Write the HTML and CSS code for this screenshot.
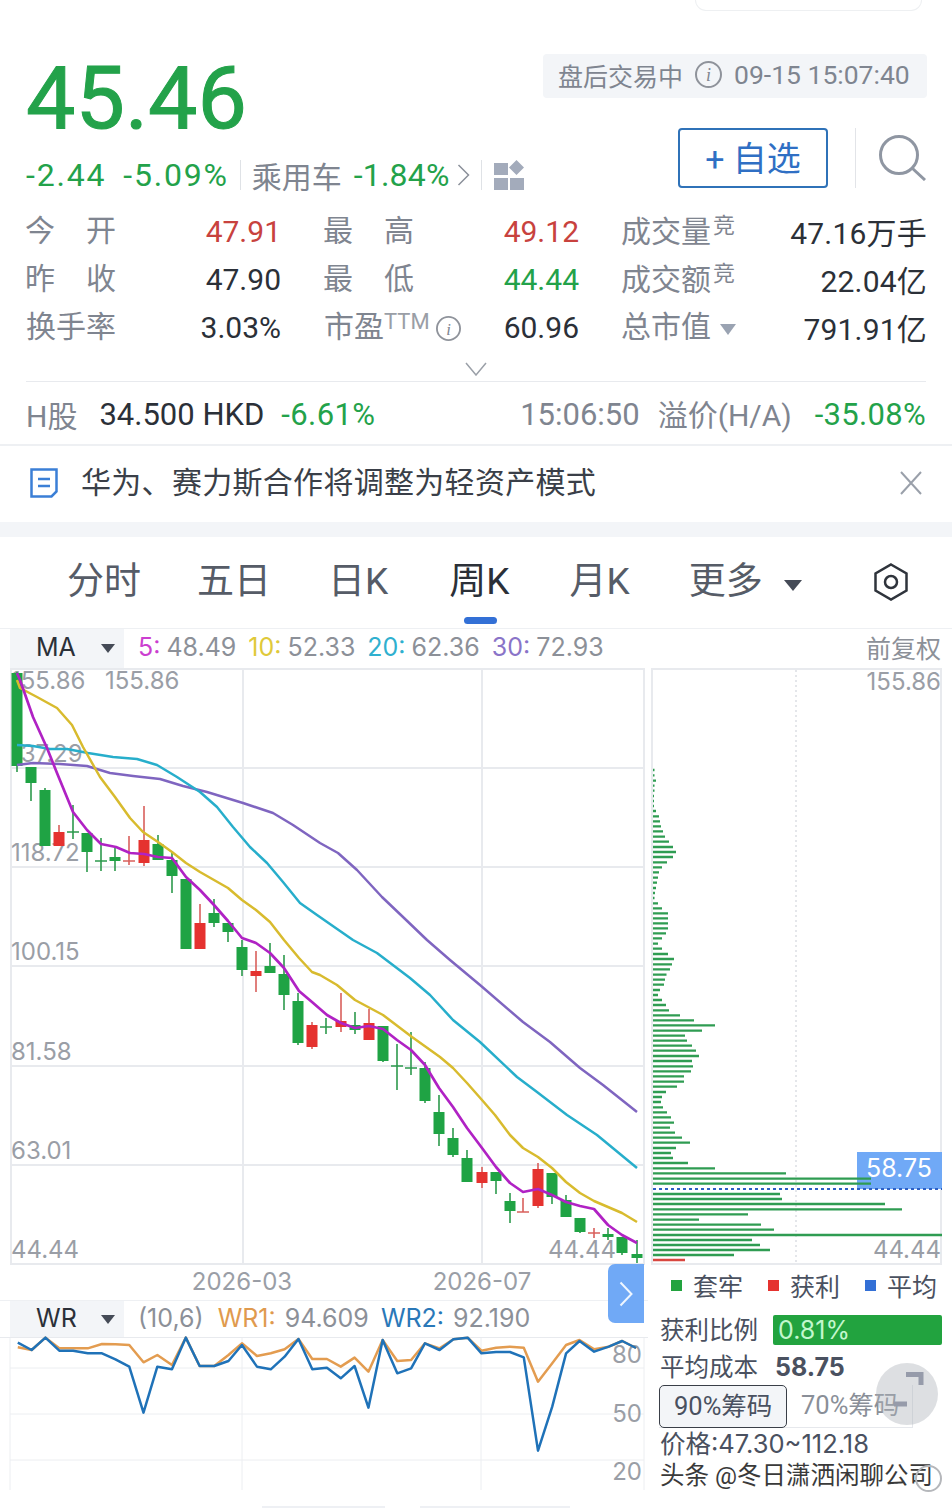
FILE: index.html
```html
<!DOCTYPE html>
<html lang="zh">
<head>
<meta charset="utf-8">
<title>45.46</title>
<link rel="stylesheet" href="styles.css">
</head>
<body>
<div class="page">
  <div class="top-pill"></div>

  <section class="quote">
    <div class="quote-left">
      <div class="price">45.46</div>
      <div class="sub">
        <span class="up sub-num">-2.44</span>
        <span class="up sub-num sub-pct">-5.09%</span>
        <i class="vbar"></i>
        <span class="muted">乘用车</span>
        <span class="up sub-sector">-1.84%</span>
        <svg class="sub-chev" viewBox="0 0 13 24"><path d="M1.5 2L11.5 12L1.5 22" /></svg>
        <i class="vbar vbar-b"></i>
        <svg class="sub-grid" viewBox="0 0 30 30"><path d="M0 3h14v12H0zM0 18h14v12H0zM16 18h14v12H16zM22.500 0l7.500 7.500-7.500 7.500-7.500-7.500z"/></svg>
      </div>
    </div>
    <div class="quote-right">
      <div class="status">
        <span>盘后交易中</span>
        <svg class="info" viewBox="0 0 27 27"><circle cx="13.500" cy="13.500" r="12.500"/><text x="13.500" y="20" text-anchor="middle">i</text></svg>
        <span class="status-time">09-15 15:07:40</span>
      </div>
      <div class="actions">
        <button class="fav">+ 自选</button>
        <i class="act-line"></i>
        <svg class="search" viewBox="0 0 48 46"><circle cx="21" cy="20" r="18.500"/><path d="M34 33L47 45"/></svg>
      </div>
    </div>
  </section>

  <section class="stats">
    <div class="cell"><span class="lbl lbl-sp"><b>今</b><b>开</b></span><span class="val red">47.91</span></div>
    <div class="cell"><span class="lbl lbl-sp"><b>最</b><b>高</b></span><span class="val red">49.12</span></div>
    <div class="cell"><span class="lbl">成交量<sup class="sup">竞</sup></span><span class="val">47.16万手</span></div>
    <div class="cell"><span class="lbl lbl-sp"><b>昨</b><b>收</b></span><span class="val">47.90</span></div>
    <div class="cell"><span class="lbl lbl-sp"><b>最</b><b>低</b></span><span class="val up">44.44</span></div>
    <div class="cell"><span class="lbl">成交额<sup class="sup">竞</sup></span><span class="val">22.04亿</span></div>
    <div class="cell"><span class="lbl">换手率</span><span class="val">3.03%</span></div>
    <div class="cell"><span class="lbl lbl-row">市盈<sup class="sup sup-ttm">TTM</sup><svg class="info info-s" viewBox="0 0 27 27"><circle cx="13.500" cy="13.500" r="12.500"/><text x="13.500" y="20" text-anchor="middle">i</text></svg></span><span class="val">60.96</span></div>
    <div class="cell"><span class="lbl lbl-row">总市值<i class="tri-s"></i></span><span class="val">791.91亿</span></div>
  </section>

  <div class="expand"><svg viewBox="0 0 22 14"><path d="M1 1L11 13L21 1"/></svg></div>

  <section class="hrow">
    <span class="muted h-name">H股</span>
    <span class="h-price">34.500 HKD</span>
    <span class="up h-pct">-6.61%</span>
    <span class="muted h-time">15:06:50</span>
    <span class="muted h-prem">溢价(H/A)</span>
    <span class="up h-val">-35.08%</span>
  </section>

  <section class="notice">
    <svg class="notice-ic" viewBox="0 0 28 30"><path d="M1.500 1.500h25v22l-5 5h-20z"/><path d="M8 11h12M8 18h12"/></svg>
    <span class="notice-text">华为、赛力斯合作将调整为轻资产模式</span>
    <svg class="notice-x" viewBox="0 0 22 24"><path d="M1 1L21 23M21 1L1 23"/></svg>
  </section>

  <div class="band"></div>

  <nav class="tabs">
    <span class="tab">分时</span>
    <span class="tab">五日</span>
    <span class="tab tab-k">日K</span>
    <span class="tab active">周K</span>
    <span class="tab tab-mon">月K</span>
    <span class="tab tab-more">更多</span>
    <i class="tab-tri"></i>
    <svg class="tab-hex" viewBox="0 0 36 38"><path d="M18 1.500L33.500 10.500V27.500L18 36.500L2.500 27.500V10.500Z"/><circle cx="18" cy="19" r="6"/></svg>
  </nav>

  <div class="legend-row">
    <div class="sel"><span>MA</span><i class="sel-tri"></i></div>
    <span class="lg c-ma5">5:</span><span class="lg-v">48.49</span>
    <span class="lg c-ma10">10:</span><span class="lg-v">52.33</span>
    <span class="lg c-ma20">20:</span><span class="lg-v">62.36</span>
    <span class="lg c-ma30">30:</span><span class="lg-v">72.93</span>
    <span class="adj">前复权</span>
  </div>

  <section class="chart-row">
    <div class="chart-left">
      <svg class="kline" viewBox="0 668 648 632">
        <path class="grid" d="M11 669H644M11 768H644M11 867H644M11 966H644M11 1066H644M11 1165H644M11 1264H644M11 668V1265M243 668V1265M482 668V1265M644 668V1265"/>
        <text class="axis" x="11" y="689">155.86</text>
        <text class="axis" x="105" y="689">155.86</text>
        <text class="axis" x="11" y="762">137.29</text>
        <text class="axis" x="11" y="861">118.72</text>
        <text class="axis" x="11" y="960">100.15</text>
        <text class="axis" x="11" y="1060">81.58</text>
        <text class="axis" x="11" y="1159">63.01</text>
        <text class="axis" x="11" y="1258">44.44</text>
        <text class="axis" x="548" y="1258">44.44</text>
        <text class="axis" x="242" y="1290" text-anchor="middle">2026-03</text>
        <text class="axis" x="482" y="1290" text-anchor="middle">2026-07</text>
        <path class="wick-g" d="M17 672V772M31 783V801M45 788V790M73 805V839M87 852V872M101 838V871M115 848V871M158 835V844M172 853V893M214 899V927M228 932V942M242 940V976M270 943V966M284 955V1010M298 993V1045M326 1018V1034M355 1012V1034M383 1061V1062M397 1044V1090M411 1032V1075M425 1062V1103M439 1095V1146M453 1128V1157M467 1150V1158M496 1181V1194M510 1193V1223M552 1197V1204M566 1195V1200M580 1232V1233M608 1228V1240M622 1253V1255M637 1240V1263M67 832h12M95 861h12M320 1027h12M391 1066h12M405 1068h12"/>
        <path class="wick-r" d="M59 825V832M129 836V865M144 806V866M200 904V923M256 951V992M312 1022V1049M341 993V1032M369 1009V1023M482 1167V1188M523 1198V1212M538 1163V1208M594 1228V1238M123 861h12M517 1212h12M588 1233h12"/>
        <path class="body-g" d="M11.500 673h11v93h-11zM25.500 767h11v16h-11zM39.500 790h11v56h-11zM81.500 833h11v19h-11zM109.500 857h11v4h-11zM152.500 844h11v16h-11zM166.500 860h11v16h-11zM180.500 879h11v70h-11zM208.500 913h11v10h-11zM222.500 923h11v9h-11zM236.500 947h11v23h-11zM264.500 966h11v7h-11zM278.500 974h11v21h-11zM292.500 1001h11v42h-11zM349.500 1025h11v5h-11zM377.500 1026h11v35h-11zM419.500 1068h11v33h-11zM433.500 1112h11v22h-11zM447.500 1138h11v17h-11zM461.500 1158h11v24h-11zM490.500 1172h11v9h-11zM504.500 1201h11v10h-11zM546.500 1173h11v24h-11zM560.500 1200h11v17h-11zM574.500 1218h11v14h-11zM602.500 1234h11v3h-11zM616.500 1237h11v16h-11zM631.500 1254h11v4h-11z"/>
        <path class="body-r" d="M53.500 832h11v14h-11zM138.500 840h11v23h-11zM194.500 923h11v26h-11zM250.500 971h11v5h-11zM306.500 1025h11v22h-11zM335.500 1021h11v6h-11zM363.500 1023h11v17h-11zM476.500 1172h11v11h-11zM532.500 1169h11v37h-11z"/>
        <polyline class="ma ma30" points="17,765 33,763 60,764 87,766 110,773 133,776 160,779 183,786 207,792 243,803 273,813 293,825 320,843 338,853 357,870 382,897 403,917 427,940 450,960 480,985 523,1022 550,1042 580,1068 603,1085 637,1112"/>
        <polyline class="ma ma20" points="17,745 33,746 50,749 67,749 88,753 113,757 137,759 157,765 177,777 200,792 217,807 233,827 250,847 267,863 283,882 300,903 317,915 353,940 377,953 410,978 430,995 453,1020 480,1042 517,1077 537,1092 567,1115 597,1135 637,1168"/>
        <polyline class="ma ma10" points="17,680 20,688 37,697 57,708 72,725 83,747 100,777 115,797 130,818 143,832 158,842 172,852 186,863 200,872 214,880 228,888 242,900 256,910 270,922 284,940 299,958 312,972 320,975 337,985 355,1000 383,1015 412,1037 440,1057 453,1068 467,1083 482,1100 495,1115 510,1135 523,1148 538,1157 552,1168 566,1182 580,1193 594,1201 608,1207 622,1213 637,1222"/>
        <polyline class="ma ma5" points="17,673 20,680 33,717 47,748 57,773 73,812 87,830 101,844 116,847 130,853 144,854 158,857 172,858 186,877 200,890 214,905 228,921 242,938 256,943 270,953 284,968 299,991 312,1002 327,1015 341,1023 355,1028 369,1026 383,1029 397,1040 411,1050 425,1065 439,1088 453,1107 467,1128 482,1148 496,1167 510,1183 523,1192 538,1189 552,1195 566,1202 580,1206 594,1209 608,1225 622,1235 637,1243"/>
      </svg>

      <div class="legend-row wr-row">
        <div class="sel"><span>WR</span><i class="sel-tri"></i></div>
        <span class="lg-v wr-param">(10,6)</span>
        <span class="lg c-wr1">WR1:</span><span class="lg-v wr-v">94.609</span>
        <span class="lg c-wr2">WR2:</span><span class="lg-v wr-v">92.190</span>
      </div>

      <svg class="wr" viewBox="0 1338 648 170">
        <path class="grid-thin" d="M10 1338V1490M242 1338V1490M481 1338V1490M644 1338V1490M10 1368H644M10 1414H644M10 1460H644"/>
        <path class="base-marks" d="M262 1507H385M420 1507H570"/>
        <text class="axis" x="642" y="1363" text-anchor="end">80</text>
        <text class="axis" x="642" y="1422" text-anchor="end">50</text>
        <text class="axis" x="642" y="1480" text-anchor="end">20</text>
        <g transform="translate(0 1260) scale(.3953 .3333)">
          <polyline class="wrl wr1" points="45,262 80,270 115,233 150,265 185,265 222,265 258,252 292,253 327,255 363,307 398,285 435,315 470,233 505,318 542,318 578,285 612,250 650,288 685,280 720,268 755,237 790,297 827,297 862,320 897,293 932,335 968,240 1005,303 1040,300 1075,250 1112,265 1147,238 1183,233 1218,272 1255,263 1290,260 1325,263 1361,365 1397,310 1432,255 1466,240 1503,268 1540,260 1574,243 1609,264"/>
          <polyline class="wrl wr2" points="45,248 80,270 115,233 150,272 185,272 222,280 258,280 292,298 327,320 363,458 398,320 435,328 470,233 505,318 542,318 578,303 612,255 650,320 685,328 720,290 755,237 790,328 827,323 862,355 897,318 932,443 968,240 1005,340 1040,325 1075,250 1112,270 1147,238 1183,233 1218,280 1255,276 1290,276 1325,292 1361,572 1397,440 1432,280 1466,243 1503,275 1540,260 1574,243 1609,264"/>
        </g>
      </svg>

      <div class="side-tab"><svg viewBox="0 0 14 26"><path d="M1.500 1.500L12.500 13L1.500 24.500"/></svg></div>
    </div>

    <div class="chart-right">
      <svg class="chips" viewBox="648 668 304 600">
        <path class="grid" d="M651 669H942M651 1264H942M652 668V1265M941 668V1265"/>
        <path class="dot-v" d="M796 670V1262"/>
        <rect class="tag" x="857" y="1152" width="85" height="37"/>
        <path class="chip-g" d="M653 770h1.500M653 775.300h1.500M653 780.700h3M653 785.700h1.500M653 790.700h1.500M653 796h1M653 801h1M653 806h1M653 811h3M653 816.300h6M653 821.300h7M653 826.300h8M653 831.300h10M653 836.700h12M653 841.700h16M653 847h20M653 852h23M653 857h20M653 862.300h14M653 867.300h9M653 872.300h6M653 877.700h5M653 882.700h4M653 888h3M653 893h2M653 898h1.500M653 903.300h5M653 908.300h9M653 913.300h15M653 918.300h15M653 923.300h15M653 928.300h15M653 933.300h13M653 938.300h9M653 943.700h5M653 948.700h9M653 954h15M653 959h21M653 964.300h19M653 969.300h17M653 974.700h13.500M653 979.700h12M653 984.700h11M653 990h7M653 995h5M653 1000h9M653 1005h13M653 1010.300h16M653 1015.300h27M653 1020.300h41M653 1025.300h62M653 1030.700h49M653 1035.700h32M653 1040.700h34M653 1045.700h39M653 1050.700h43M653 1056h46M653 1061h39M653 1066.300h40M653 1071.300h38M653 1076.300h31M653 1081.700h31M653 1086.700h24M653 1092h13M653 1097h9M653 1102h8M653 1107.300h10M653 1112.300h14M653 1117.300h18M653 1122.700h21M653 1127.700h17M653 1132.700h22M653 1137.700h29M653 1142.700h37M653 1148h23M653 1153h18M653 1158h20M653 1163h35M653 1168.300h62M653 1173.300h133M653 1178.700h218M653 1183.700h218M653 1194h127M653 1199h129M653 1204h232M653 1209.300h249M653 1214.300h95M653 1219.700h46M653 1224.700h108M653 1229.700h121M653 1235h289M653 1240h99M653 1245h107M653 1250h117M653 1255h81"/>
        <path class="chip-r" d="M653 1260h32"/>
        <path class="dot-h" d="M653 1189H942"/>
        <text class="axis" x="941" y="690" text-anchor="end">155.86</text>
        <text class="tag-text" x="899" y="1177" text-anchor="middle">58.75</text>
        <text class="axis" x="941" y="1258" text-anchor="end">44.44</text>
      </svg>

      <div class="chip-legend">
        <i class="sq sq-g"></i><span>套牢</span>
        <i class="sq sq-r"></i><span>获利</span>
        <i class="sq sq-b"></i><span>平均</span>
      </div>
      <div class="chip-line chip-profit">
        <span class="chip-key">获利比例</span>
        <div class="profit-bar">0.81%</div>
      </div>
      <div class="chip-line chip-avg"><span class="chip-key">平均成本</span><b class="avg-val">58.75</b></div>
      <div class="chip-tabs">
        <span class="chip-tab on">90%筹码</span>
        <span class="chip-tab">70%筹码</span>
      </div>
      <div class="chip-line chip-range">价格:47.30~112.18</div>
      <div class="watermark">头条 @冬日潇洒闲聊公司</div>

      <div class="float-btn">
        <svg viewBox="0 0 62 62"><path d="M30 11.500H45V22M18 41H31"/></svg>
      </div>
      <i class="ring"></i>
    </div>
  </section>
</div>
</body>
</html>
```

FILE: styles.css
```css
* { box-sizing: border-box; }
html, body { margin: 0; padding: 0; background: #fff; }
body { font-family: Roboto, "Noto Sans CJK SC", sans-serif; color: #2b3038; }
i { display: block; font-style: normal; }
.page { width: 952px; height: 1508px; overflow: hidden; }

.up { color: #23a24a; }
.red { color: #c8423e; }
.muted { color: #7f8590; }

.top-pill { width: 227px; height: 11px; margin-left: 695px; border: 1px solid #eef0f2; border-top: 0; border-radius: 0 0 22px 22px; }

/* quote */
.quote { display: flex; justify-content: space-between; height: 196px; padding: 43px 25px 0 26px; }
.price { font-size: 88px; line-height: 87px; font-weight: 400; color: #23a24a; -webkit-text-stroke: 1px #23a24a; }
.sub { display: flex; align-items: center; height: 40px; margin-top: 14px; font-size: 30px; white-space: nowrap; }
.sub-num { font-size: 32px; letter-spacing: 1.800px; }
.sub-pct { margin-left: 17px; }
.vbar { width: 1px; height: 30px; background: #dfe2e6; margin: 0 11px; }
.sub-sector { margin-left: 12px; font-size: 32px; letter-spacing: .2px; }
.sub-chev { width: 13px; height: 24px; margin-left: 7px; fill: none; stroke: #8b909a; stroke-width: 1.500; }
.vbar-b { margin: 0 12px 0 11px; }
.sub-grid { width: 30px; height: 30px; fill: #a3abbb; }

.quote-right { display: flex; flex-direction: column; align-items: flex-end; width: 384px; }
.status { display: flex; align-items: center; width: 384px; height: 44px; padding: 0 0 3px 15px; background: #f3f5f8; border-radius: 4px; font-size: 25px; color: #7f8590; }
.info { width: 27px; height: 27px; margin-left: 12px; fill: none; stroke: #8f939b; stroke-width: 2; }
.info text { font: italic 18px "Liberation Serif", serif; fill: #7f8590; stroke: none; }
.status-time { margin-left: 12px; font-size: 26.500px; }
.actions { display: flex; align-items: center; margin-top: 30px; height: 60px; width: 384px; padding-left: 135px; }
.fav { width: 150px; height: 60px; padding: 0 0 3px; background: #fff; border: 2px solid #2f72b8; border-radius: 4px; color: #2f6fc4; font: 400 34px Roboto, "Noto Sans CJK SC", sans-serif; }
.act-line { width: 1px; height: 60px; margin-left: 27px; background: #e2e4e8; }
.search { width: 48px; height: 46px; margin-left: 22px; fill: none; stroke: #8f96a2; stroke-width: 3; }

/* stats */
.stats { display: grid; grid-template-columns: 255px 255px 305px; column-gap: 43px; grid-auto-rows: 48px; padding: 0 26px; }
.cell { display: flex; align-items: center; justify-content: space-between; font-size: 30px; }
.stats .cell:nth-child(3n) { margin: 0 0 0 -1px; }
.stats .cell:nth-child(3n) .val { letter-spacing: .2px; }
.lbl { color: #7f8590; line-height: 1; }
.lbl-sp { display: flex; justify-content: space-between; width: 91px; margin-left: -1px; }
.lbl-sp b { font-weight: 400; }
.lbl-row { display: flex; align-items: center; }
.sup { font-size: 22px; line-height: 1; vertical-align: 9px; margin-left: 2px; }
.sup-ttm { align-self: flex-start; margin: -1px 0 0 0; color: #9a9ea6; }
.info-s { width: 25px; height: 25px; margin-left: 6px; margin-top: 2px; }
.tri-s { width: 0; height: 0; margin: 4px 0 0 9px; border: 8px solid transparent; border-top: 11px solid #9aa3b2; border-bottom: 0; }
.val { color: #2b3038; }
.val.red { color: #c8423e; }
.val.up { color: #23a24a; }

.expand { height: 31px; margin: 0 26px; padding-top: 11px; border-bottom: 1px solid #e8eaee; }
.expand svg { display: block; width: 22px; height: 14px; margin: 0 auto; fill: none; stroke: #9ba0a8; stroke-width: 1.500; }

.hrow { display: flex; align-items: center; height: 64px; padding: 2px 26px 0; font-size: 31px; white-space: nowrap; border-bottom: 2px solid #eef0f3; }
.h-name { font-size: 30px; }
.h-price { margin-left: 22px; color: #2b3038; }
.h-pct { margin-left: 17px; letter-spacing: .4px; }
.h-time { margin-left: auto; }
.h-prem { margin-left: 18px; margin-bottom: 3px; font-size: 30px; }
.h-val { margin-left: 23px; letter-spacing: .3px; }

.notice { display: flex; align-items: center; height: 76px; padding: 0 30px 3px; }
.notice-ic { width: 28px; height: 30px; fill: none; stroke: #3b7fd6; stroke-width: 2.500; }
.notice-text { margin: 0 0 5px 23px; font-size: 30px; letter-spacing: .3px; color: #3a3f48; }
.notice-x { width: 22px; height: 24px; margin-left: auto; fill: none; stroke: #9aa0aa; stroke-width: 2; }

.band { height: 15px; background: #f3f5f8; }

/* tabs */
.tabs { display: flex; align-items: center; gap: 56px; height: 92px; padding: 0 0 2px 67px; border-bottom: 1px solid #eef0f3; }
.tab { position: relative; font-size: 37px; line-height: 44px; color: #565c67; white-space: nowrap; }
.tab-k { margin-left: 1px; }
.tab-mon { margin-left: 4px; }
.tab-more { margin-left: 3px; }
.tab.active { margin-left: 5px; color: #2b3038; }
.tab.active::after { content: ""; position: absolute; left: 15px; top: 57px; width: 33px; height: 7px; border-radius: 4px; background: #3370d6; }
.tab-tri { margin-left: -35px; margin-top: 8px; width: 0; height: 0; border: 9px solid transparent; border-top: 11px solid #454b57; border-bottom: 0; }
.tab-hex { width: 36px; height: 38px; margin-left: 15px; fill: none; stroke: #2f343c; stroke-width: 2.500; }

/* legend */
.legend-row { display: flex; align-items: center; height: 39px; font-size: 26px; font-family: Inter, Roboto, "Noto Sans CJK SC", sans-serif; }
.legend-row > span { margin-bottom: 3px; }
.sel { display: flex; align-items: center; justify-content: space-between; width: 114px; height: 100%; margin-left: 10px; padding: 0 9px 3px 26px; background: #f3f5f8; color: #2b3038; }
.sel span { font-size: 25px; }
.sel-tri { width: 0; height: 0; margin-top: 3px; border: 7px solid transparent; border-top: 9px solid #454b57; border-bottom: 0; }
.legend-row .sel + span { margin-left: 14px; }
.lg { margin-right: 6px; font-size: 25px; }
.lg-v { margin-right: 12px; color: #8c9098; font-size: 25px; }
.c-ma5 { color: #cc3fd0; }
.c-ma10 { color: #e0c93a; }
.c-ma20 { color: #2fb0cf; }
.c-ma30 { color: #8a74c8; }
.c-wr1 { color: #e09a4e; }
.c-wr2 { color: #2a78b8; }
.adj { margin-left: auto; margin-right: 11px; font-size: 25px; color: #8c9098; }

/* charts */
.chart-row { display: flex; height: 840px; }
.chart-left { position: relative; width: 648px; flex: none; }
.kline { display: block; width: 648px; height: 632px; overflow: visible; }
.wr-row { height: 38px; border-top: 1px solid #eef0f3; border-bottom: 1px solid #e8eaee; }
.wr-param { margin-right: 14px; }
.lg-v.wr-v { margin-left: 3px; }
.wr { display: block; width: 648px; height: 170px; overflow: visible; }

.grid { fill: none; stroke: #e8eaee; stroke-width: 2; }
.grid-thin { fill: none; stroke: #eceef1; stroke-width: 1; }
.base-marks { fill: none; stroke: #eef0f4; stroke-width: 2; }
.axis { font: 400 24px Inter, Roboto, sans-serif; fill: #9a9ea6; }
.wick-g { fill: none; stroke: #2d9a4d; stroke-width: 1.600; }
.wick-r { fill: none; stroke: #d9605c; stroke-width: 1.600; }
.body-g { fill: #1fa344; }
.body-r { fill: #e5322f; }
.ma { fill: none; stroke-width: 2.500; stroke-linejoin: round; }
.ma5 { stroke: #b022c4; stroke-width: 2.700; }
.ma10 { stroke: #d8bb2e; }
.ma20 { stroke: #27aecb; }
.ma30 { stroke: #7f65c0; }
.wrl { fill: none; stroke-width: 2.500; vector-effect: non-scaling-stroke; stroke-linejoin: round; }
.wr1 { stroke: #e39c50; }
.wr2 { stroke: #1f72b8; }

.side-tab { position: absolute; left: 608px; top: 596px; display: flex; align-items: center; justify-content: center; width: 36px; height: 59px; background: #70a9f6; border-radius: 7px 0 0 7px; }
.side-tab svg { width: 14px; height: 26px; fill: none; stroke: #eef6ff; stroke-width: 2; }

.chart-right { position: relative; flex: none; width: 304px; }
.chips { display: block; width: 304px; height: 600px; overflow: visible; }
.dot-v { fill: none; stroke: #e4e6ea; stroke-width: 2; stroke-dasharray: 2 3; }
.tag { fill: #70a9f6; }
.tag-text { font: 400 25px Inter, Roboto, sans-serif; fill: #fff; }
.chip-g { fill: none; stroke: #2f9c52; stroke-width: 2.300; }
.chip-r { fill: none; stroke: #d8463f; stroke-width: 2.500; }
.dot-h { fill: none; stroke: #2c5fc4; stroke-width: 2; stroke-dasharray: 3 3; }

.chip-legend { display: flex; align-items: center; height: 38px; padding: 0 0 4px 23px; font-size: 25px; color: #4a5160; white-space: nowrap; }
.sq { flex: none; width: 11px; height: 11px; margin-right: 11px; }
.chip-legend span { flex: none; margin-right: 25px; }
.chip-legend span:last-child { margin-right: 0; }
.sq-g { background: #22a33f; }
.sq-r { background: #e5322f; }
.sq-b { background: #3370d6; }
.chip-line { display: flex; align-items: center; height: 30px; padding-left: 12px; font-size: 24.500px; color: #4a5160; }
.chip-key { margin-bottom: 4px; }
.chip-profit { margin-top: 9px; }
.profit-bar { width: 169px; height: 30px; margin-left: 15px; padding-left: 5px; background: #22a33f; border-radius: 2px; color: #c3f7cd; font: 400 25px/30px Inter, Roboto, sans-serif; }
.chip-avg { margin-top: 7px; }
.avg-val { margin-left: 17px; font: 700 25px Inter, Roboto, sans-serif; }
.chip-tabs { display: flex; align-items: center; width: 254px; height: 43px; margin: 3px 0 0 11px; border-bottom: 1px solid #e6e8ec; border-right: 1px solid #e6e8ec; white-space: nowrap; }
.chip-tab { flex: none; margin-right: 14px; padding: 0 0 0 14px; height: 43px; line-height: 41px; font-size: 25.500px; color: #8a8f98; }
.chip-tab + .chip-tab { padding: 0; margin-right: 0; }
.chip-tab.on { width: 128px; border: 1px solid #3a3f48; border-radius: 5px; background: #f3f5f8; color: #4a5160; }
.chip-line.chip-range { padding-bottom: 4px; font-family: Inter, Roboto, "Noto Sans CJK SC", sans-serif; font-size: 25.500px; }
.watermark { margin: 3px 0 0 12px; height: 30px; font-size: 24.500px; line-height: 30px; color: #3a3a3a; white-space: nowrap; text-shadow: 1px 1px 0 #fff, -1px -1px 0 #fff, 1px -1px 0 #fff, -1px 1px 0 #fff; }

.float-btn { position: absolute; left: 228px; top: 695px; width: 62px; height: 62px; border-radius: 50%; background: rgba(175, 178, 186, .42); }
.float-btn svg { display: block; width: 62px; height: 62px; fill: none; stroke: #969baa; stroke-width: 5; }
.ring { position: absolute; left: 267px; top: 797px; width: 27px; height: 27px; border: 2px solid #b5b7bb; border-radius: 50%; }
```
